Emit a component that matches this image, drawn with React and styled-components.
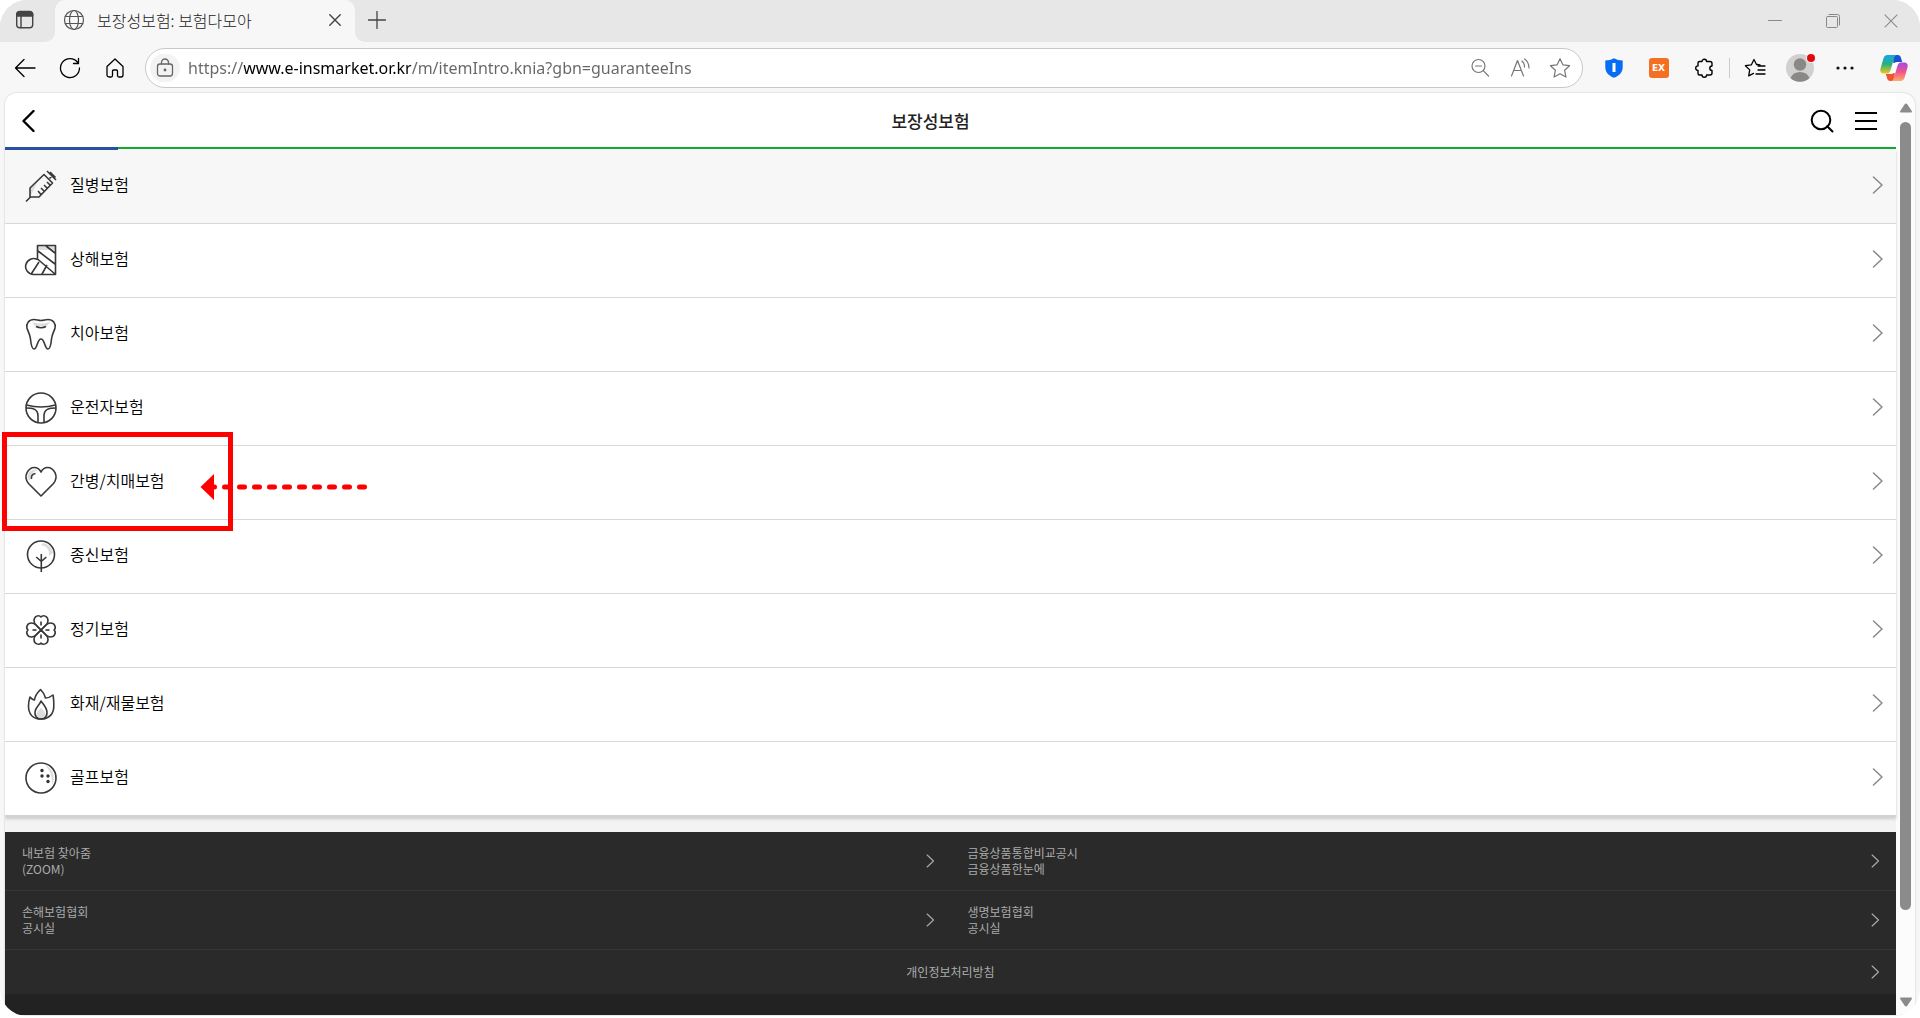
import React, { useState } from "react";
import styled, { createGlobalStyle } from "styled-components";

const categories = [
  { name: "질병보험", icon: "syringe" },
  { name: "상해보험", icon: "cast" },
  { name: "치아보험", icon: "tooth" },
  { name: "운전자보험", icon: "wheel" },
  { name: "간병/치매보험", icon: "heart" },
  { name: "종신보험", icon: "tree" },
  { name: "정기보험", icon: "clover" },
  { name: "화재/재물보험", icon: "fire" },
  { name: "골프보험", icon: "golf" },
];

const footerLinks = [
  ["내보험 찾아줌", "(ZOOM)"],
  ["금융상품통합비교공시", "금융상품한눈에"],
  ["손해보험협회", "공시실"],
  ["생명보험협회", "공시실"],
];

const petalPath =
  "M16 16 11 11c-1.500-1.500-2-3-2-4.500C9 2 14 .500 16 3c2-2.500 7-1 7 3.500 0 1.500-.5 3-2 4.500Z";

const categoryIcons = {
  syringe: (
    <>
      <path d="M5 19 13 11 5 27Z" fill="#ddd" stroke="none" />
      <path d="M1 31.5 5.5 27M5 27v-9L19 4.5l8.5 8.5L14 27ZM22 1l9 9M24.500 8.500 28 5M25 2l5.500 5.500M13 21l3 3.500M16 18l3.500 3.500M19 15l3.500 3.500M22 12l3 3" />
    </>
  ),
  cast: (
    <>
      <path d="M13 2h17v4H13Z" fill="#ddd" stroke="none" />
      <path d="M12.500 14.500V1.500h18v29H8.500a8 8 0 1 1 4-15M21 2l9 7M13 7l17 13M12.500 15 30 30M6.500 29.500 14 18M17 30l5-9" />
    </>
  ),
  tooth: (
    <>
      <path d="M7 4q9 3 18 0l-3 4H10Z" fill="#ddd" stroke="none" />
      <path d="M9 1.500c3 0 4 1 7 1s4-1 7-1c5 0 8 4 7 8.500-1 4-3 6-3.500 11-.4 4-.8 10-3.500 10-3.500 0-3-10-7-10s-3.500 10-7 10c-2.700 0-3.100-6-3.500-10C5 16 3 14 2 10c-1-4.500 2-8.500 7-8.500ZM11 8.500q5 2.500 10 0" />
    </>
  ),
  wheel: (
    <>
      <circle cx="16" cy="16" r="15" />
      <path d="M1.500 13Q16 17 30.500 13" />
      <path d="M1 16c7 0 12 1 12 8v6.500M31 16c-7 0-12 1-12 8v6.500" />
    </>
  ),
  heart: (
    <>
      <path d="M3 13C1 6 8 2 13 4q-8 2-8 11Z" fill="#ddd" stroke="none" />
      <path d="M16 30 3.500 17.500C-2.500 10 3.500 1.500 9.500 1.500c3 0 5 1.700 6.500 4.500 1.500-2.800 3.500-4.500 6.500-4.500 6 0 12 8.500 6 16Z" />
      <path d="M6.500 13c-.5-3 1-5 4-5.500" />
    </>
  ),
  tree: (
    <>
      <path d="M18 3a12 12 0 0 1 10 10l-4 3C25 9 21 6 16 5Z" fill="#ddd" stroke="none" />
      <circle cx="16" cy="14.500" r="13.500" />
      <path d="M16.300 14v18M16.300 21.500l-5-4.500M16.300 21.500l5-4.500" />
    </>
  ),
  clover: (
    <>
      {[0, 90, 180, 270].map((angle) => (
        <g key={angle} transform={`rotate(${angle} 16 16)`}>
          <path d={petalPath} />
          <path d="M16 7.500v4" />
        </g>
      ))}
    </>
  ),
  fire: (
    <>
      <path d="M16 20q-7 6-3 9 3 2 6 0 4-3-3-9Z" fill="#ddd" stroke="none" />
      <path d="M16 31C7 31 3.500 25 3.500 18c0-4 .5-6 1.500-9 1.500 2 2.500 2.500 4.500 3C10 7 13 4 15.500 1.500 18 4 20 7 20.500 10c2.500 0 5-1 7.500-3 .7 3 .8 7 .8 11C28.800 25 25 31 16 31Z" />
      <path d="M16 31c-4 0-6.500-3-6-7 .5-5 5-7 6-11 2 3 5.500 6 6 11 .4 4-2 7-6 7Z" />
    </>
  ),
  golf: (
    <>
      <path d="M20 3a14 14 0 0 1 7 20q1-12-7-20Z" fill="#ddd" stroke="none" />
      <circle cx="16" cy="16" r="15" />
      <g fill="#333" stroke="none">
        <circle cx="17" cy="8.500" r="1.700" />
        <circle cx="17" cy="14" r="1.700" />
        <circle cx="23" cy="14" r="1.700" />
        <circle cx="23" cy="19.500" r="1.700" />
      </g>
    </>
  ),
};

const CategoryIcon = ({ name }) => (
  <CategorySvg viewBox="0 0 32 32" aria-hidden="true">
    {categoryIcons[name]}
  </CategorySvg>
);

const TabIcon = () => (
  <Svg width="20" height="20" viewBox="0 0 20 20" color="#444" line={1.4}>
    <rect x="1.700" y="1.700" width="16" height="16" rx="3" />
    <path d="M1.700 6V4.500a3 3 0 0 1 3-3h10a3 3 0 0 1 3 3V6Z" fill="#444" />
    <path d="M6 6v11.500" />
  </Svg>
);

const GlobeIcon = () => (
  <Svg width="22" height="22" viewBox="0 0 22 22" color="#555" line={1.2}>
    <circle cx="11" cy="11" r="9.500" />
    <ellipse cx="11" cy="11" rx="4.500" ry="9.500" />
    <path d="M2.300 7.500h17.400M2.300 14.500h17.400" />
  </Svg>
);

const CloseIcon = ({ size = 12, color = "#444", line = 1.4 }) => (
  <Svg width={size} height={size} viewBox="0 0 12 12" color={color} line={line}>
    <path d="m.8.8 10.400 10.400M11.200.8.8 11.200" />
  </Svg>
);

const LockIcon = () => (
  <Svg width="18" height="20" viewBox="0 0 18 20" color="#666" line={1.3}>
    <rect x="1.500" y="6" width="15" height="12" rx="2.500" />
    <path d="M5.500 6V4.500a3.500 3.500 0 0 1 7 0V6" />
    <circle cx="9" cy="12" r=".8" fill="#666" />
  </Svg>
);

const starPath =
  "m10 1.500 2.600 5.600 6.100.8-4.500 4.200 1.200 6.100L10 15.200l-5.400 3 1.200-6.100L1.300 7.900l6.100-.8Z";

const ProfileIcon = () => (
  <Svg width="30" height="30" viewBox="0 0 30 30">
    <circle cx="14" cy="15" r="14" fill="#d2d0ce" stroke="none" />
    <circle cx="14" cy="11.500" r="6.200" fill="#8a8886" stroke="none" />
    <path d="M4.500 25q2.500-6 9.500-6t9.500 6a14 14 0 0 1-19 0Z" fill="#8a8886" stroke="none" />
    <circle cx="25" cy="5" r="4.800" fill="#f7f7f7" stroke="none" />
    <circle cx="25" cy="5" r="4" fill="#e00b0b" stroke="none" />
  </Svg>
);

const CopilotIcon = () => (
  <Svg width="28" height="28" viewBox="0 0 28 28">
    <defs>
      <linearGradient id="copilotLeft" x1="0" y1="0" x2="0" y2="1">
        <stop offset="0" stopColor="#17a5ee" />
        <stop offset=".5" stopColor="#27b27c" />
        <stop offset="1" stopColor="#f5c518" />
      </linearGradient>
      <linearGradient id="copilotRight" x1="0" y1="0" x2="0" y2="1">
        <stop offset="0" stopColor="#a24bea" />
        <stop offset=".5" stopColor="#f0528c" />
        <stop offset="1" stopColor="#ffab6b" />
      </linearGradient>
    </defs>
    <g stroke="none">
      <path d="M13 1h4.500c2.200 0 3 1.200 3.500 3l1.200 4H17c-2 0-3 1-3.600 3Z" fill="#1b50cf" />
      <path d="M15 27h-4.500c-2.200 0-3-1.200-3.500-3l-1.200-4H11c2 0 3-1 3.600-3Z" fill="#ee5630" />
      <path d="M12.500 9h5l-2.500 10h-5Z" fill="#fff" />
      <path d="M7.500 1H17c-1.500 0-2.300 1.300-2.900 3.200l-3.600 12c-.8 2.500-1.800 3.300-3.800 3.300H3.500C.8 19.500-.2 17.300.5 14.500L3.500 4.200C4.200 2 5.500 1 7.500 1Z" fill="url(#copilotLeft)" />
      <path d="M20.500 27H11c1.500 0 2.300-1.300 2.900-3.200l3.600-12c.8-2.500 1.800-3.300 3.800-3.300h3.200c2.700 0 3.700 2.200 3 5l-3 10.300c-.7 2.200-2 3.200-4 3.200Z" fill="url(#copilotRight)" />
    </g>
  </Svg>
);

const Chevron = ({ small }) => (
  <Svg
    width={small ? 9 : 12}
    height={small ? 14 : 18}
    viewBox="0 0 12 18"
    color={small ? "#aaa" : "#888"}
    line={1.5}
  >
    <path d="m1.500 1 8.500 8-8.500 8" />
  </Svg>
);

const BrowserTabs = () => (
  <TabStrip>
    <TabMenu type="button" aria-label="탭 작업 메뉴">
      <TabIcon />
    </TabMenu>
    <Tab>
      <GlobeIcon />
      <TabTitle>보장성보험: 보험다모아</TabTitle>
      <IconButton type="button" aria-label="탭 닫기" $width={20}>
        <CloseIcon />
      </IconButton>
    </Tab>
    <NewTab type="button" aria-label="새 탭">
      <Svg width="18" height="18" viewBox="0 0 18 18" color="#444" line={1.3}>
        <path d="M9 .5v17M.5 9h17" />
      </Svg>
    </NewTab>
    <WindowControls>
      <IconButton type="button" aria-label="최소화" $width={58}>
        <Svg width="14" height="14" viewBox="0 0 14 14" color="#888" line={1}>
          <path d="M.5 6.500h13" />
        </Svg>
      </IconButton>
      <IconButton type="button" aria-label="이전 크기로" $width={58}>
        <Svg width="14" height="14" viewBox="0 0 14 14" color="#888" line={1}>
          <rect x=".5" y="2.500" width="11" height="11" rx="1" />
          <path d="M3 .5h8.500a2 2 0 0 1 2 2V11" />
        </Svg>
      </IconButton>
      <IconButton type="button" aria-label="닫기" $width={58}>
        <CloseIcon size={14} color="#888" line={0.9} />
      </IconButton>
    </WindowControls>
  </TabStrip>
);

const Toolbar = () => {
  const [url, setUrl] = useState(
    "https://www.e-insmarket.or.kr/m/itemIntro.knia?gbn=guaranteeIns"
  );

  return (
    <ToolbarWrap>
      <NavButtons>
        <IconButton type="button" aria-label="뒤로" $width={45}>
          <Svg width="22" height="22" viewBox="0 0 22 22" line={1.3}>
            <path d="M21 11H1.500M10 2.500 1.500 11l8.500 8.500" />
          </Svg>
        </IconButton>
        <IconButton type="button" aria-label="새로 고침" $width={45}>
          <Svg width="22" height="22" viewBox="0 0 22 22" line={1.3}>
            <path d="M20.500 11A9.500 9.500 0 1 1 18.700 5.500M19.500 1.500v5h-5" />
          </Svg>
        </IconButton>
        <IconButton type="button" aria-label="홈" $width={45}>
          <Svg width="20" height="22" viewBox="0 0 20 22" line={1.3}>
            <path d="M2 9.500 10 2l8 7.500V18a2 2 0 0 1-2 2h-2a1.500 1.500 0 0 1-1.500-1.500V14a1 1 0 0 0-1-1h-3a1 1 0 0 0-1 1v4.500A1.500 1.500 0 0 1 6 20H4a2 2 0 0 1-2-2Z" />
          </Svg>
        </IconButton>
      </NavButtons>
      <AddressBar>
        <SiteInfo type="button" aria-label="사이트 정보 보기">
          <LockIcon />
        </SiteInfo>
        <UrlInput
          type="text"
          aria-label="주소 및 검색창"
          spellCheck={false}
          value={url}
          onChange={(e) => setUrl(e.target.value)}
        />
        <IconButton type="button" aria-label="축소" $width={40}>
          <Svg width="20" height="20" viewBox="0 0 20 20" color="#777" line={1.2}>
            <circle cx="8.500" cy="8" r="6.500" />
            <path d="M5.500 8h6M13.200 12.700l5.300 5.300" />
          </Svg>
        </IconButton>
        <IconButton type="button" aria-label="소리내어 읽기" $width={40}>
          <Svg width="20" height="20" viewBox="0 0 20 20" color="#777" line={1.2}>
            <path d="m1.500 18 6-15.500 6 15.500M3.500 12.500h8M12 3q2.500 2 2.500 6M14.500 1q4.500 3 4.500 9" />
          </Svg>
        </IconButton>
        <IconButton type="button" aria-label="즐겨찾기에 추가" $width={40}>
          <Svg width="22" height="22" viewBox="0 0 20 20" color="#777" line={1.1}>
            <path d={starPath} />
          </Svg>
        </IconButton>
      </AddressBar>
      <Extensions>
        <IconButton type="button" aria-label="보안 확장" $width={45}>
          <Svg width="18" height="20" viewBox="0 0 18 20">
            <path d="M9 .2q3.800 2.300 8.700 2.300V9c0 5-3 8.500-8.700 10.800C3.300 17.500.3 14 .3 9V2.500Q5.200 2.500 9 .2Z" fill="#086df5" stroke="none" />
            <path d="M7.500 5h3v9h-3Z" fill="#fff" stroke="none" />
          </Svg>
        </IconButton>
        <IconButton type="button" aria-label="EX 확장" $width={45}>
          <ExBadge>EX</ExBadge>
        </IconButton>
        <IconButton type="button" aria-label="확장" $width={46}>
          <Svg width="20" height="20" viewBox="0 0 20 20" line={1.4}>
            <path d="M5.500 3.500H8a2.300 2.300 0 0 1 4.600 0H16a2 2 0 0 1 2 2V8a2.200 2.200 0 0 0 0 4.400V15a2 2 0 0 1-2 2h-3.400a2.300 2.300 0 0 1-4.600 0H5.500A1.500 1.500 0 0 1 4 15.500v-3a2.300 2.300 0 0 1 0-4.600V5a1.500 1.500 0 0 1 1.500-1.500Z" />
          </Svg>
        </IconButton>
        <Divider />
        <IconButton type="button" aria-label="즐겨찾기" $width={50}>
          <Svg width="22" height="20" viewBox="0 0 22 20" line={1.3}>
            <path d="M13 6.500h-.5L10 1.500 7.400 6.800l-6 .9 4.300 4.200-1 6 4.800-2.500M14 8h7M14 12h7M12 16h9M13 6.500l3 .4" />
          </Svg>
        </IconButton>
        <IconButton type="button" aria-label="프로필" $width={42}>
          <ProfileIcon />
        </IconButton>
        <IconButton type="button" aria-label="설정 및 기타" $width={46}>
          <Svg width="18" height="6" viewBox="0 0 18 6">
            <g fill="#111" stroke="none">
              <circle cx="2" cy="3" r="1.600" />
              <circle cx="9" cy="3" r="1.600" />
              <circle cx="16" cy="3" r="1.600" />
            </g>
          </Svg>
        </IconButton>
        <IconButton type="button" aria-label="Copilot" $width={52}>
          <CopilotIcon />
        </IconButton>
      </Extensions>
    </ToolbarWrap>
  );
};

const ScrollBar = () => (
  <ScrollTrack aria-hidden="true">
    <Svg width="14" height="12" viewBox="0 0 14 12">
      <path d="M7 1.500q.8 0 1.300.8l4.500 6.700q.7 1.500-.8 1.500H2q-1.500 0-.8-1.500l4.500-6.700q.5-.8 1.300-.8Z" fill="#8b8b8b" stroke="none" />
    </Svg>
    <ScrollThumb />
    <Svg width="14" height="12" viewBox="0 0 14 12">
      <path d="M7 10.500q.8 0 1.300-.8L12.800 3q.7-1.500-.8-1.500H2Q.5 1.500 1.200 3l4.500 6.700q.5.800 1.300.8Z" fill="#8b8b8b" stroke="none" />
    </Svg>
  </ScrollTrack>
);

const App = () => {
  return (
    <>
      <GlobalStyle />
      <Browser>
        <BrowserTabs />
        <Toolbar />
        <Viewport>
          <Page>
            <Header>
              <IconButton type="button" aria-label="이전" $width={46}>
                <Svg width="14" height="22" viewBox="0 0 14 22" line={2.4}>
                  <path d="M12.500 1 2.500 11l10 10" />
                </Svg>
              </IconButton>
              <HeaderTitle>보장성보험</HeaderTitle>
              <HeaderMenu>
                <IconButton type="button" aria-label="검색" $width={44}>
                  <Svg width="24" height="24" viewBox="0 0 24 24" line={2}>
                    <circle cx="11" cy="11" r="9.300" />
                    <path d="m17.200 17.200 5.300 5.300" />
                  </Svg>
                </IconButton>
                <IconButton type="button" aria-label="메뉴" $width={44}>
                  <Svg width="22" height="18" viewBox="0 0 22 18" line={2}>
                    <path d="M.5 1h21M.5 9h21M.5 17h21" />
                  </Svg>
                </IconButton>
              </HeaderMenu>
            </Header>
            <Progress>
              <ProgressBar />
            </Progress>

            <CategoryList>
              {categories.map((item, idx) => (
                <li key={item.icon}>
                  <CategoryLink href={`#${item.icon}`} $active={idx === 0}>
                    <CategoryIcon name={item.icon} />
                    <CategoryName>{item.name}</CategoryName>
                    <Chevron />
                  </CategoryLink>
                </li>
              ))}
            </CategoryList>

            <Footer>
              <FooterGrid>
                {footerLinks.map(([title, sub]) => (
                  <FooterLink href="#link" key={title}>
                    <span>
                      {title}
                      <br />
                      {sub}
                    </span>
                    <Chevron small />
                  </FooterLink>
                ))}
              </FooterGrid>
              <PrivacyLink href="#privacy">
                <span>개인정보처리방침</span>
                <Chevron small />
              </PrivacyLink>
            </Footer>
          </Page>
          <ScrollBar />
        </Viewport>
        <Highlight />
        <Arrow viewBox="0 0 168 28" aria-hidden="true">
          <path d="M.5 14 14 1v26Z" fill="#f00" />
          <path d="M9.500 14H165" stroke="#f00" strokeWidth="5" strokeDasharray="5 10" strokeLinecap="round" />
        </Arrow>
      </Browser>
    </>
  );
};

const GlobalStyle = createGlobalStyle`
  * {
    box-sizing: border-box;
  }

  body {
    margin: 0;
    background: #fff;
    font-family: "Noto Sans CJK KR", sans-serif;
  }

  button {
    padding: 0;
    border: none;
    background: none;
    font-family: inherit;
    cursor: pointer;
  }

  a {
    color: inherit;
    text-decoration: none;
  }
`;

const Svg = styled.svg.attrs(({ color = "#000", line = 1 }) => ({
  fill: "none",
  stroke: color,
  strokeWidth: line,
  strokeLinecap: "round",
  strokeLinejoin: "round",
}))`
  display: block;
  flex: none;
`;

const Browser = styled.div`
  position: relative;
  display: flex;
  flex-direction: column;
  min-height: calc(100vh - 2px);
  border-radius: 27px;
  background: #f7f7f7;
  overflow: hidden;
`;

const IconButton = styled.button`
  display: flex;
  align-items: center;
  justify-content: center;
  flex: none;
  width: ${({ $width }) => $width}px;
`;

const TabStrip = styled.div`
  display: flex;
  height: 42px;
  background: #e7e7e7;
`;

const TabMenu = styled.button`
  display: flex;
  align-items: center;
  width: 55px;
  padding: 0 0 2px 15px;
  border-radius: 0 0 10px 0;
  background: #e7e7e7;
  box-shadow: 10px 10px 0 #f7f7f7;
`;

const Tab = styled.div`
  display: flex;
  align-items: center;
  gap: 12px;
  width: 300px;
  padding: 0 10px 2px 8px;
  border-radius: 10px 10px 0 0;
  background: #f7f7f7;
`;

const TabTitle = styled.span`
  flex: 1;
  font-size: 16px;
  font-weight: 300;
  line-height: 24px;
  color: #222;
`;

const NewTab = styled.button`
  display: flex;
  align-items: center;
  justify-content: center;
  width: 44px;
  padding-bottom: 3px;
  border-radius: 0 0 0 10px;
  background: #e7e7e7;
  box-shadow: -10px 10px 0 #f7f7f7;
`;

const WindowControls = styled.div`
  display: flex;
  margin-left: auto;
`;

const ToolbarWrap = styled.div`
  display: flex;
  align-items: center;
  height: 51px;
  padding-left: 2px;
`;

const NavButtons = styled.div`
  display: flex;
  width: 143px;
`;

const AddressBar = styled.div`
  display: flex;
  flex: 1;
  align-items: center;
  height: 40px;
  padding: 0 2px 0 4px;
  border: 1px solid #c8c8c8;
  border-radius: 20px;
  background: #fff;
`;

const SiteInfo = styled.button`
  display: flex;
  align-items: center;
  justify-content: center;
  width: 30px;
  height: 28px;
  border-radius: 14px;
  background: #f3f3f3;
`;

/* the host name is darker than the rest of the address */
const UrlInput = styled.input`
  flex: 1;
  min-width: 0;
  height: 28px;
  margin-left: 8px;
  padding: 0;
  border: none;
  outline: none;
  background: linear-gradient(90deg, #666 56px, #000 56px 223px, #666 223px);
  background-clip: text;
  -webkit-background-clip: text;
  color: transparent;
  font-family: "Noto Sans", sans-serif;
  font-size: 16px;
`;

const Extensions = styled.div`
  display: flex;
  align-items: center;
  padding-left: 8px;
`;

const ExBadge = styled.span`
  width: 20px;
  height: 20px;
  border-radius: 3px;
  background: #f46f22;
  color: #fff;
  font-family: "DejaVu Sans", sans-serif;
  font-size: 9px;
  font-weight: 700;
  line-height: 20px;
`;

const Divider = styled.span`
  width: 1px;
  height: 20px;
  margin-left: 2px;
  background: #ccc;
`;

const Viewport = styled.main`
  display: flex;
  flex: 1;
  margin: 0 5px 1px;
  border-radius: 12px 12px 12px 0;
  background: #fcfcfc;
  box-shadow: 0 0 2px #bbb;
  overflow: hidden;
`;

const Page = styled.div`
  display: flex;
  flex: 1;
  flex-direction: column;
  background: #f3f3f3;
`;

const Header = styled.header`
  display: flex;
  height: 54px;
  padding-top: 2px;
  background: #fff;
`;

const HeaderTitle = styled.h1`
  flex: 1;
  margin: 0;
  padding-left: 10px;
  font-size: 17px;
  font-weight: 500;
  line-height: 52px;
  text-align: center;
  color: #222;
`;

const HeaderMenu = styled.div`
  display: flex;
  padding-right: 8px;
`;

const Progress = styled.div`
  height: 2px;
  background: #0fa72a;
`;

const ProgressBar = styled.div`
  position: relative;
  width: 6%;
  height: 3px;
  background: #294fa3;
`;

const CategoryList = styled.ul`
  margin: 0 0 15px;
  padding: 1px 0 0;
  border-bottom: 2px solid #d3d3d3;
  background: #f7f7f7;
  box-shadow: 0 2px 3px #ccc;
  list-style: none;
`;

const CategoryLink = styled.a`
  display: flex;
  align-items: center;
  gap: 13px;
  height: 74px;
  padding: 0 12px 4px 20px;
  border-bottom: 1px solid #d8d8d8;
  background: ${({ $active }) => ($active ? "#f7f7f7" : "#fff")};

  li:last-child & {
    height: 73px;
    border-bottom: none;
  }
`;

const CategorySvg = styled.svg`
  width: 32px;
  height: 32px;
  margin-top: 2px;
  overflow: visible;
  fill: none;
  stroke: #383838;
  stroke-width: 1.6;
  stroke-linejoin: round;
`;

const CategoryName = styled.span`
  flex: 1;
  padding-bottom: 2px;
  font-size: 16px;
  font-weight: 350;
  line-height: 24px;
  color: #000;
`;

const Footer = styled.footer`
  flex: 1;
  background: #222;
  color: #aaa;
  font-size: 12px;
  line-height: 16px;
`;

const FooterGrid = styled.div`
  display: grid;
  grid-template-columns: 1fr 1fr;
`;

const FooterLink = styled.a`
  display: flex;
  align-items: center;
  justify-content: space-between;
  height: 59px;
  padding: 0 16px 0 17px;
  border-bottom: 1px solid #363636;
  background: #2a2a2a;
`;

const PrivacyLink = styled(FooterLink)`
  height: 44px;
  padding-left: 25px;
  border-bottom: none;

  & span {
    flex: 1;
    text-align: center;
  }
`;

const ScrollTrack = styled.div`
  display: flex;
  flex-direction: column;
  align-items: center;
  width: 19px;
  padding: 9px 0 7px;
`;

const ScrollThumb = styled.div`
  flex: none;
  width: 11px;
  height: 87%;
  margin: 8px 0 auto;
  border-radius: 6px;
  background: #8b8b8b;
`;

const Highlight = styled.div`
  position: absolute;
  top: 432px;
  left: 2px;
  width: 231px;
  height: 99px;
  border: 5px solid #f00;
  pointer-events: none;
`;

const Arrow = styled.svg`
  position: absolute;
  top: 473px;
  left: 200px;
  width: 168px;
  height: 28px;
  pointer-events: none;
`;

export default App;
